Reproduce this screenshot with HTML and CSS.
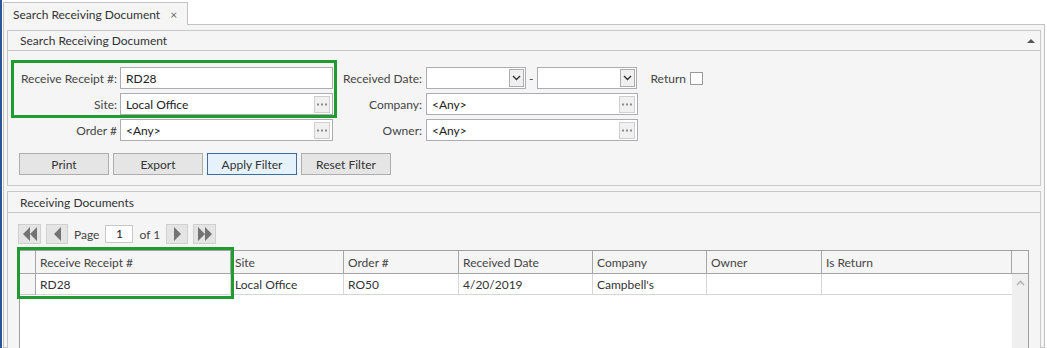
FILE: index.html
```html
<!DOCTYPE html>
<html>
<head>
<meta charset="utf-8">
<link rel="stylesheet" href="styles.css">
</head>
<body>
<div class="app">
  <div class="tabstrip">
    <div class="tab"><span class="tab-title">Search Receiving Document</span><span class="tab-close">×</span></div>
  </div>
  <div class="page">
    <section class="group g1">
      <div class="ghead"><span>Search Receiving Document</span><span class="collapse"></span></div>
      <div class="gbody">
        <div class="form">
          <div class="col col1">
            <label>Receive Receipt #:</label>
            <div class="input">RD28</div>
            <label>Site:</label>
            <div class="input">Local Office<span class="dots"><svg width="10" height="3" viewBox="0 0 10 3"><rect x="0" y="0.5" width="2" height="2" fill="#8c8c8c"/><rect x="4" y="0.5" width="2" height="2" fill="#8c8c8c"/><rect x="8" y="0.5" width="2" height="2" fill="#8c8c8c"/></svg></span></div>
            <label>Order #</label>
            <div class="input">&lt;Any&gt;<span class="dots"><svg width="10" height="3" viewBox="0 0 10 3"><rect x="0" y="0.5" width="2" height="2" fill="#8c8c8c"/><rect x="4" y="0.5" width="2" height="2" fill="#8c8c8c"/><rect x="8" y="0.5" width="2" height="2" fill="#8c8c8c"/></svg></span></div>
            <div class="hl hl1"></div>
          </div>
          <div class="col col2">
            <label>Received Date:</label>
            <div class="daterow">
              <div class="input date"><span class="dd"><svg width="9" height="6" viewBox="0 0 9 6"><path d="M1 1 L4.5 4.5 L8 1" fill="none" stroke="#333" stroke-width="1.4"/></svg></span></div>
              <span class="dash">-</span>
              <div class="input date"><span class="dd"><svg width="9" height="6" viewBox="0 0 9 6"><path d="M1 1 L4.5 4.5 L8 1" fill="none" stroke="#333" stroke-width="1.4"/></svg></span></div>
              <span class="ret">Return</span><span class="check"></span>
            </div>
            <label>Company:</label>
            <div class="input wide">&lt;Any&gt;<span class="dots"><svg width="10" height="3" viewBox="0 0 10 3"><rect x="0" y="0.5" width="2" height="2" fill="#8c8c8c"/><rect x="4" y="0.5" width="2" height="2" fill="#8c8c8c"/><rect x="8" y="0.5" width="2" height="2" fill="#8c8c8c"/></svg></span></div>
            <label>Owner:</label>
            <div class="input wide">&lt;Any&gt;<span class="dots"><svg width="10" height="3" viewBox="0 0 10 3"><rect x="0" y="0.5" width="2" height="2" fill="#8c8c8c"/><rect x="4" y="0.5" width="2" height="2" fill="#8c8c8c"/><rect x="8" y="0.5" width="2" height="2" fill="#8c8c8c"/></svg></span></div>
          </div>
        </div>
        <div class="buttons">
          <button class="btn">Print</button>
          <button class="btn">Export</button>
          <button class="btn primary">Apply Filter</button>
          <button class="btn">Reset Filter</button>
        </div>
      </div>
    </section>
    <section class="group g2">
      <div class="ghead"><span>Receiving Documents</span></div>
      <div class="gbody2">
        <div class="pager">
          <span class="pbtn first"><svg width="16" height="14" viewBox="0 0 16 14"><path d="M8 0 L1 7 L8 14 Z M15 0 L8 7 L15 14 Z" fill="#737373"/></svg></span>
          <span class="pbtn"><svg width="9" height="14" viewBox="0 0 9 14"><path d="M8 0 L1 7 L8 14 Z" fill="#737373"/></svg></span>
          <span class="ptext">Page</span>
          <span class="pinput">1</span>
          <span class="ptext">of 1</span>
          <span class="pbtn"><svg width="9" height="14" viewBox="0 0 9 14"><path d="M1 0 L8 7 L1 14 Z" fill="#737373"/></svg></span>
          <span class="pbtn last"><svg width="16" height="14" viewBox="0 0 16 14"><path d="M1 0 L8 7 L1 14 Z M8 0 L15 7 L8 14 Z" fill="#737373"/></svg></span>
        </div>
        <div class="grid">
          <div class="row head">
            <div class="cell sel"></div>
            <div class="cell c1">Receive Receipt #</div>
            <div class="cell c2">Site</div>
            <div class="cell c3">Order #</div>
            <div class="cell c4">Received Date</div>
            <div class="cell c5">Company</div>
            <div class="cell c6">Owner</div>
            <div class="cell c7">Is Return</div>
            <div class="cell c8"></div>
          </div>
          <div class="gridbody">
            <div class="rows">
              <div class="row data">
                <div class="cell sel"></div>
                <div class="cell c1">RD28</div>
                <div class="cell c2">Local Office</div>
                <div class="cell c3">RO50</div>
                <div class="cell c4">4/20/2019</div>
                <div class="cell c5">Campbell's</div>
                <div class="cell c6"></div>
                <div class="cell c7"></div>
              </div>
            </div>
            <div class="vscroll"><svg width="9" height="6" viewBox="0 0 9 6"><path d="M1 5 L4.5 1.5 L8 5" fill="none" stroke="#b4b4b4" stroke-width="1.6"/></svg></div>
          </div>
          <div class="hl hl2"></div>
        </div>
      </div>
    </section>
  </div>
</div>
</body>
</html>
```
FILE: styles.css
```css
* { box-sizing: border-box; }
body {
  margin: 0;
  background: #fff;
  font-family: Lato, "Noto Sans", sans-serif;
  font-size: 12px;
  color: #333;
  overflow: hidden;
}
.app {
  height: 348px;
  border-left: 2px solid #2b579a;
  display: flex;
  flex-direction: column;
}
.tabstrip {
  flex: none;
  height: 24px;
  display: flex;
  align-items: flex-end;
  padding-left: 1px;
}
.tab {
  position: relative;
  z-index: 1;
  width: 185px;
  height: 23px;
  margin-bottom: -1px;
  border: 1px solid #c3c3c3;
  border-bottom: none;
  background: #f5f5f5;
  display: flex;
  align-items: center;
  padding-left: 9px;
  color: #333;
}
.tab-close {
  margin-left: 10px;
  color: #666;
  font-size: 12px;
}
.page {
  flex: 1;
  min-height: 0;
  margin: 0 2px 0 1px;
  border: 1px solid #c3c3c3;
  background: #f5f5f5;
  padding: 5px 3px 0 3px;
  display: flex;
  flex-direction: column;
  gap: 5px;
}
.group {
  border: 1px solid #c8c8c8;
  background: #f5f5f5;
}
.g1 { flex: none; }
.g2 { flex: none; }
.ghead {
  height: 20px;
  border-bottom: 1px solid #c8c8c8;
  display: flex;
  align-items: center;
  padding: 0 5px 0 12px;
  color: #333;
}
.g2 .ghead { height: 21px; }
.collapse {
  margin-left: auto;
  width: 0;
  height: 0;
  border-left: 4px solid transparent;
  border-right: 4px solid transparent;
  border-bottom: 4px solid #555;
}
.gbody {
  padding: 16px 0 10px 3px;
}
.form {
  display: flex;
}
.col {
  display: grid;
  row-gap: 4px;
  grid-auto-rows: 22px;
  align-items: center;
}
.col1 {
  position: relative;
  grid-template-columns: 106px 213px;
  column-gap: 3px;
}
.col2 {
  grid-template-columns: 89px auto;
  column-gap: 4px;
}
label {
  text-align: right;
  color: #444;
  white-space: nowrap;
}
.input {
  height: 22px;
  border: 1px solid #abadb3;
  background: #fff;
  padding-left: 5px;
  display: flex;
  align-items: center;
  color: #222;
}
.input.wide { width: 212px; }
.dots {
  margin-left: auto;
  margin-right: 2px;
  width: 16px;
  height: 17px;
  border: 1px solid #cfcfcf;
  background: #f0f0f0;
  display: flex;
  align-items: center;
  justify-content: center;
}
.daterow {
  display: flex;
  align-items: center;
  height: 22px;
}
.input.date {
  width: 100px;
  padding-left: 0;
}
.dd {
  margin-left: auto;
  margin-right: 1px;
  width: 15px;
  height: 18px;
  border: 1px solid #acacac;
  background: #f0f0f0;
  display: flex;
  align-items: center;
  justify-content: center;
}
.dash {
  margin: 0 4px 0 3px;
  color: #444;
}
.ret {
  margin-left: 13px;
  color: #444;
}
.check {
  margin-left: 4px;
  width: 13px;
  height: 13px;
  border: 1px solid #9a9a9a;
  background: #fff;
}
.hl {
  position: absolute;
  border: 3px solid #1f9b30;
  pointer-events: none;
}
.hl1 {
  top: -7px;
  left: 0;
  width: 326px;
  height: 58px;
}
.buttons {
  display: flex;
  gap: 4px;
  margin: 12px 0 0 8px;
}
.btn {
  width: 90px;
  height: 22px;
  border: 1px solid #adadad;
  background: #e5e5e5;
  font-family: inherit;
  font-size: 12px;
  color: #333;
  padding: 0;
}
.btn.primary {
  border-color: #3a6ea5;
  background: #e5f1fb;
}
.gbody2 {
  padding: 11px 0 0 10px;
}
.pager {
  display: flex;
  align-items: center;
  height: 20px;
  gap: 5px;
}
.pbtn {
  width: 22px;
  height: 20px;
  border: 1px solid #d0d0d0;
  background: #e4e4e4;
  display: flex;
  align-items: center;
  justify-content: center;
}
.pbtn.first, .pbtn.last { width: 23px; }
.ptext { color: #444; margin: 0 1px; }
.pinput {
  width: 28px;
  height: 18px;
  border: 1px solid #c8c8c8;
  background: #fff;
  text-align: center;
  line-height: 16px;
  color: #222;
}
.grid {
  position: relative;
  margin: 6px 0 0 1px;
  width: 1010px;
  height: 140px;
  border: 1px solid #a0a0a0;
  border-bottom: none;
  background: #fff;
  display: flex;
  flex-direction: column;
}
.row { display: flex; }
.cell {
  flex: none;
  padding-left: 4px;
  display: flex;
  align-items: center;
  white-space: nowrap;
}
.head .cell {
  height: 23px;
  background: #f5f5f5;
  border-right: 1px solid #a6a6a6;
  border-bottom: 1px solid #a6a6a6;
  color: #444;
}
.head .cell.c8 { border-right: none; }
.data .cell {
  height: 21px;
  border-right: 1px solid #d6d6d6;
  border-bottom: 1px solid #d6d6d6;
  color: #333;
}
.data .cell.sel {
  background: #f5f5f5;
  border-right-color: #a6a6a6;
  border-bottom-color: #c8c8c8;
}
.data .cell.c7 { border-right: none; }
.sel { width: 16px; }
.c1 { width: 195px; }
.c2 { width: 113px; }
.c3 { width: 115px; }
.c4 { width: 134px; }
.c5 { width: 114px; }
.c6 { width: 115px; }
.c7 { width: 190px; }
.c8 { width: 16px; }
.gridbody {
  flex: 1;
  display: flex;
}
.rows { width: 992px; }
.vscroll {
  width: 16px;
  background: #efefef;
  display: flex;
  justify-content: center;
  align-items: flex-start;
  padding-top: 6px;
}
.hl2 {
  top: -4px;
  left: -3px;
  width: 217px;
  height: 52px;
}
```
